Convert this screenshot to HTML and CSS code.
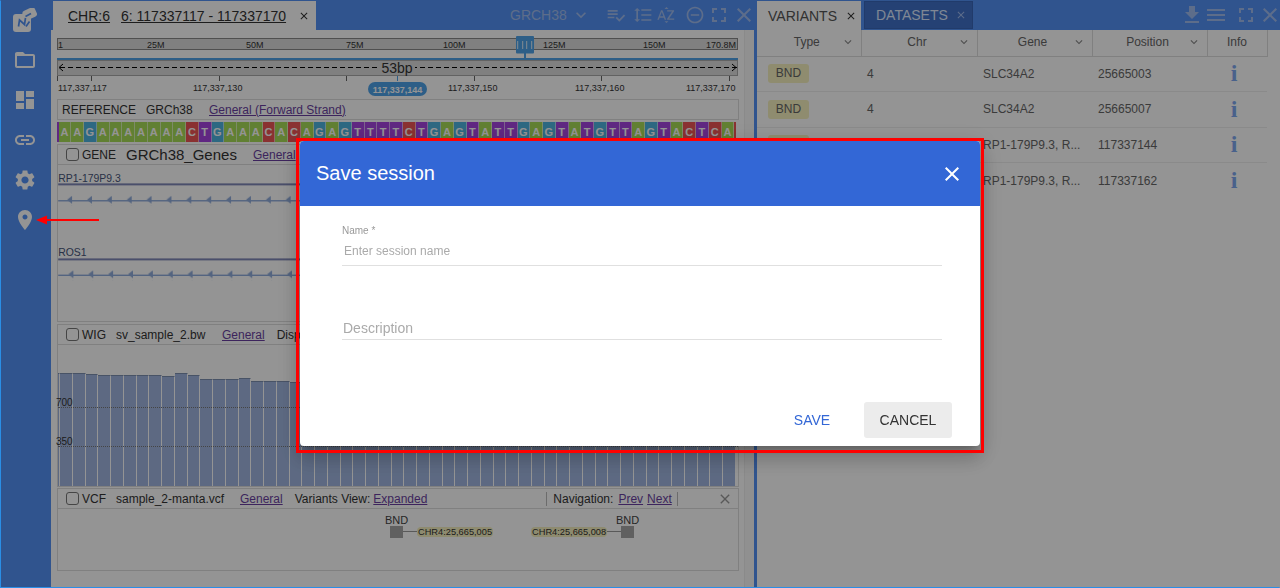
FILE: index.html
```html
<!DOCTYPE html>
<html lang="en">
<head>
  <meta charset="UTF-8">
  <title>NGB - Save session</title>
  <link rel="stylesheet" href="styles.css">
</head>
<body>
  <svg class="defs" width="0" height="0">
    <symbol id="i-close" viewBox="0 0 24 24"><path d="M19 6.41L17.59 5 12 10.59 6.41 5 5 6.41 10.59 12 5 17.59 6.41 19 12 13.41 17.59 19 19 17.59 13.41 12z"/></symbol>
    <symbol id="i-full" viewBox="0 0 24 24"><path d="M7 14H5v5h5v-2H7v-3zm-2-4h2V7h3V5H5v5zm12 7h-3v2h5v-5h-2v3zM14 5v2h3v3h2V5h-5z"/></symbol>
    <symbol id="i-more" viewBox="0 0 24 24"><path d="M16.59 8.59L12 13.17 7.41 8.59 6 10l6 6 6-6z"/></symbol>
  </svg>

  <div class="app">
    <nav class="sidebar">
      <svg class="logo" viewBox="0 0 24 24">
        <rect x="0" y="6" width="18" height="18" rx="3"/>
        <rect x="10" y="1" width="13.500" height="10" rx="3" transform="rotate(-25 16 6)"/>
        <path class="logo-mark" d="M5.500 18.500l1-6.500 5 4.500 1-6.500M12.500 8.500l5.500-3M13 18.500l3.500-5"/>
      </svg>
      <svg class="nav-icon" viewBox="0 0 24 24"><path d="M20 6h-8l-2-2H4c-1.100 0-1.990.9-1.990 2L2 18c0 1.100.9 2 2 2h16c1.100 0 2-.9 2-2V8c0-1.100-.9-2-2-2zm0 12H4V8h16v10z"/></svg>
      <svg class="nav-icon" viewBox="0 0 24 24"><path d="M3 13h8V3H3v10zm0 8h8v-6H3v6zm10 0h8V11h-8v10zm0-18v6h8V3h-8z"/></svg>
      <svg class="nav-icon" viewBox="0 0 24 24"><path d="M3.900 12c0-1.710 1.390-3.100 3.100-3.100h4V7H7c-2.760 0-5 2.240-5 5s2.240 5 5 5h4v-1.900H7c-1.710 0-3.100-1.390-3.100-3.100zM8 13h8v-2H8v2zm9-6h-4v1.900h4c1.710 0 3.100 1.390 3.100 3.100s-1.390 3.100-3.100 3.100h-4V17h4c2.760 0 5-2.240 5-5s-2.240-5-5-5z"/></svg>
      <svg class="nav-icon" viewBox="0 0 24 24"><path d="M19.140 12.940c.04-.3.06-.61.06-.94 0-.32-.02-.64-.07-.94l2.030-1.580c.18-.14.23-.41.12-.61l-1.920-3.320c-.12-.22-.37-.29-.59-.22l-2.390.96c-.5-.38-1.030-.7-1.620-.94l-.36-2.540c-.04-.24-.24-.41-.48-.41h-3.840c-.24 0-.43.17-.47.41l-.36 2.540c-.59.24-1.130.57-1.620.94l-2.390-.96c-.22-.08-.47 0-.59.22L2.740 8.870c-.12.21-.08.47.12.61l2.030 1.580c-.05.3-.09.63-.09.94s.02.64.07.94l-2.030 1.580c-.18.14-.23.41-.12.61l1.920 3.320c.12.22.37.29.59.22l2.390-.96c.5.38 1.030.7 1.620.94l.36 2.540c.05.24.24.41.48.41h3.840c.24 0 .44-.17.47-.41l.36-2.540c.59-.24 1.130-.56 1.620-.94l2.390.96c.22.08.47 0 .59-.22l1.920-3.320c.12-.22.07-.47-.12-.61l-2.010-1.580zM12 15.600c-1.980 0-3.600-1.620-3.600-3.600s1.620-3.600 3.600-3.600 3.600 1.620 3.600 3.600-1.620 3.600-3.600 3.600z"/></svg>
      <svg class="nav-icon" viewBox="0 0 24 24"><path d="M12 2C8.130 2 5 5.130 5 9c0 5.250 7 13 7 13s7-7.750 7-13c0-3.870-3.130-7-7-7zm0 9.500c-1.380 0-2.500-1.120-2.500-2.500s1.120-2.500 2.500-2.500 2.500 1.120 2.500 2.500-1.120 2.500-2.500 2.500z"/></svg>
    </nav>

    <section class="browser">
      <header class="panel-head">
        <div class="tab tab-browser">
          <a class="tab-chr">CHR:6</a>
          <a class="tab-pos">6: 117337117 - 117337170</a>
          <svg class="tab-x"><use href="#i-close"/></svg>
        </div>
        <div class="head-tools tools-left">
          <span class="ref-name">GRCH38</span>
          <svg class="tool tool-more"><use href="#i-more"/></svg>
          <svg class="tool tool-check" viewBox="0 0 24 24"><path d="M14 10H2v2h12v-2zm0-4H2v2h12V6zM2 16h8v-2H2v2zm19.500-4.500L23 13l-6.990 7-4.510-4.500L13 14l3.010 3 5.490-5.500z"/></svg>
          <svg class="tool tool-spacing" viewBox="0 0 24 24"><path d="M6 7h2.500L5 3.500 1.500 7H4v10H1.500L5 20.500 8.500 17H6V7zm4-2v2h12V5H10zm0 14h12v-2H10v2zm0-6h12v-2H10v2z"/></svg>
          <svg class="tool tool-sort" viewBox="0 0 24 24"><path d="M14.940 4.660h-4.720l2.360-2.360zm-4.690 14.710h4.660l-2.330 2.330zM6.100 6.270L1.600 17.730h1.840l.92-2.450h5.110l.92 2.450h1.840L7.740 6.270H6.100zm-1.130 7.370l1.940-5.180 1.940 5.180H4.970zm10.760 2.500h6.120v1.590h-8.530v-1.290l5.920-8.560h-5.880v-1.600h8.300v1.260l-5.930 8.600z"/></svg>
          <svg class="tool tool-minus" viewBox="0 0 24 24"><path d="M7 11v2h10v-2H7zm5-9C6.480 2 2 6.480 2 12s4.480 10 10 10 10-4.480 10-10S17.520 2 12 2zm0 18c-4.410 0-8-3.590-8-8s3.590-8 8-8 8 3.590 8 8-3.590 8-8 8z"/></svg>
          <svg class="tool tool-big tool-full"><use href="#i-full"/></svg>
          <svg class="tool tool-big tool-end"><use href="#i-close"/></svg>
        </div>
      </header>

      <div class="browser-body">
        <div class="tracks">
          <svg class="scale" width="682" height="63" viewBox="0 0 682 63">
            <rect class="ruler" x="0.500" y="2.500" width="680" height="11"/>
            <text x="1" y="11.500">1</text>
            <text x="90" y="11.500">25M</text>
            <text x="189" y="11.500">50M</text>
            <text x="289" y="11.500">75M</text>
            <text x="386" y="11.500">100M</text>
            <text x="486" y="11.500">125M</text>
            <text x="586" y="11.500">150M</text>
            <text x="649" y="11.500">170.8M</text>
            <rect class="blue" x="0" y="22" width="681" height="2"/>
            <rect class="blue" x="459" y="0" width="18" height="17.500" rx="1"/>
            <rect class="blue" x="467" y="17" width="2" height="5"/>
            <path class="brush-lines" d="M460.700 5v8M465.700 5v8M469.700 5v8M474.700 5v8"/>
            <rect class="span-bar" x="0.500" y="24.500" width="680" height="15"/>
            <path class="dash" d="M3 31.500h677"/>
            <path class="arrow" d="M6 28l-4 3.500 4 3.500M675 28l4 3.500-4 3.500"/>
            <rect class="bp-back" x="322" y="26" width="36" height="12"/>
            <text class="bp" x="340" y="37">53bp</text>
            <path class="tick" d="M.5 40v5M34.500 40v5M162.500 40v5M289.500 40v5M417.500 40v5M544.500 40v5M672.500 40v5"/>
            <path class="tick-now" d="M340.500 40v5"/>
            <text x="1" y="54.500">117,337,117</text>
            <text x="136" y="54.500">117,337,130</text>
            <rect class="blue" x="311" y="46" width="59" height="14" rx="7"/>
            <text class="pill-text" x="340.500" y="56.500">117,337,144</text>
            <text x="391" y="54.500">117,337,150</text>
            <text x="518" y="54.500">117,337,160</text>
            <text x="629" y="54.500">117,337,170</text>
          </svg>

          <div class="track-head head-ref">
            <span class="name-ref">REFERENCE</span>
            <span class="name-genome">GRCh38</span>
            <a class="link">General (Forward Strand)</a>
          </div>
          <div class="seq">
            <i class="edge t"></i><i class="a">A</i><i class="a">A</i><i class="g">G</i><i class="a">A</i><i class="a">A</i><i class="a">A</i><i class="a">A</i><i class="a">A</i><i class="a">A</i><i class="a">A</i><i class="c">C</i><i class="t">T</i><i class="g">G</i><i class="a">A</i><i class="a">A</i><i class="a">A</i><i class="c">C</i><i class="a">A</i><i class="c">C</i><i class="a">A</i><i class="g">G</i><i class="a">A</i><i class="g">G</i><i class="t">T</i><i class="t">T</i><i class="t">T</i><i class="t">T</i><i class="c">C</i><i class="t">T</i><i class="g">G</i><i class="a">A</i><i class="g">G</i><i class="t">T</i><i class="a">A</i><i class="t">T</i><i class="t">T</i><i class="g">G</i><i class="a">A</i><i class="g">G</i><i class="t">T</i><i class="a">A</i><i class="t">T</i><i class="g">G</i><i class="t">T</i><i class="t">T</i><i class="a">A</i><i class="g">G</i><i class="t">T</i><i class="a">A</i><i class="c">C</i><i class="t">T</i><i class="c">C</i><i class="a">A</i><i class="edge c"></i>
          </div>

          <div class="track-head head-gene">
            <span class="check"></span>
            <span class="kind">GENE</span>
            <span class="name-genes">GRCh38_Genes</span>
            <a class="link">General</a>
          </div>
          <svg class="gene-track" width="682" height="157" viewBox="0 0 682 157">
            <defs>
              <pattern id="chevrons" width="20" height="10" patternUnits="userSpaceOnUse" x="7" y="0">
                <path d="M6 1L1 5l5 4z"/>
              </pattern>
            </defs>
            <text x="-1" y="17">RP1-179P9.3</text>
            <rect class="gene-bar" x="-1" y="18.500" width="682" height="2"/>
            <rect class="gene-line" x="-1" y="35.300" width="682" height="1.400"/>
            <rect x="7" y="31" width="674" height="10" fill="url(#chevrons)"/>
            <text x="-1" y="92">ROS1</text>
            <rect class="gene-bar" x="-1" y="94" width="682" height="2"/>
            <rect class="gene-line" x="-1" y="110.300" width="682" height="1.400"/>
            <g transform="translate(1.300 75)"><rect x="7" y="31" width="672" height="10" fill="url(#chevrons)"/></g>
          </svg>

          <div class="track-head head-wig">
            <span class="check"></span>
            <span class="kind">WIG</span>
            <span class="name-file">sv_sample_2.bw</span>
            <a class="link">General</a>
            <span class="wig-display">Display</span>
          </div>
          <div class="wig-track">
            <div class="wig-bars">
              <i class="edge" style="height:113px"></i><i style="height:113px"></i><i style="height:113px"></i><i style="height:112px"></i><i style="height:111px"></i><i style="height:111px"></i><i style="height:111px"></i><i style="height:111px"></i><i style="height:111px"></i><i style="height:110px"></i><i style="height:113px"></i><i style="height:111px"></i><i style="height:107px"></i><i style="height:107px"></i><i style="height:107px"></i><i style="height:108px"></i><i style="height:105px"></i><i style="height:105px"></i><i style="height:105px"></i><i style="height:104px"></i><i style="height:104px"></i><i style="height:104px"></i><i style="height:104px"></i><i style="height:104px"></i><i style="height:104px"></i><i style="height:104px"></i><i style="height:104px"></i><i style="height:104px"></i><i style="height:104px"></i><i style="height:104px"></i><i style="height:104px"></i><i style="height:104px"></i><i style="height:104px"></i><i style="height:104px"></i><i style="height:104px"></i><i style="height:104px"></i><i style="height:104px"></i><i style="height:104px"></i><i style="height:104px"></i><i style="height:104px"></i><i style="height:104px"></i><i style="height:104px"></i><i style="height:104px"></i><i style="height:104px"></i><i style="height:104px"></i><i style="height:104px"></i><i style="height:104px"></i><i style="height:104px"></i><i style="height:104px"></i><i style="height:104px"></i><i style="height:104px"></i><i style="height:104px"></i><i style="height:104px"></i><i style="height:104px"></i>
            </div>
            <div class="wig-mark mark-700"><span>700</span></div>
            <div class="wig-mark mark-350"><span>350</span></div>
          </div>

          <div class="track-head head-vcf">
            <span class="check"></span>
            <span class="kind">VCF</span>
            <span class="name-file">sample_2-manta.vcf</span>
            <a class="link">General</a>
            <span class="view-label">Variants View:</span>
            <a class="link">Expanded</a>
            <div class="nav-box">
              <span>Navigation:</span>
              <a class="link">Prev</a>
              <a class="link">Next</a>
            </div>
            <svg class="head-x"><use href="#i-close"/></svg>
          </div>
          <div class="vcf-track">
            <div class="bnd bnd-left">
              <div class="bnd-mark"><span>BND</span><b></b></div>
              <em></em>
              <span class="bnd-label">CHR4:25,665,005</span>
            </div>
            <div class="bnd bnd-right">
              <span class="bnd-label">CHR4:25,665,008</span>
              <em></em>
              <div class="bnd-mark"><span>BND</span><b></b></div>
            </div>
          </div>
        </div>
        <div class="scroll-col"></div>
      </div>
    </section>

    <div class="divider"></div>

    <section class="variants">
      <header class="panel-head">
        <div class="tab tab-variants">
          <span>VARIANTS</span>
          <svg class="tab-x"><use href="#i-close"/></svg>
        </div>
        <div class="tab tab-datasets">
          <span>DATASETS</span>
          <svg class="tab-x"><use href="#i-close"/></svg>
        </div>
        <div class="head-tools tools-right">
          <svg class="tool tool-big" viewBox="0 0 24 24"><path d="M19 9h-4V3H9v6H5l7 7 7-7zM5 18v2h14v-2H5z"/></svg>
          <svg class="tool tool-big" viewBox="0 0 24 24"><path d="M3 18h18v-2H3v2zm0-5h18v-2H3v2zm0-7v2h18V6H3z"/></svg>
          <svg class="tool tool-big tool-gap"><use href="#i-full"/></svg>
          <svg class="tool tool-big"><use href="#i-close"/></svg>
        </div>
      </header>
      <table class="grid">
        <colgroup><col class="c-type"><col class="c-chr"><col class="c-std"><col class="c-std"><col class="c-info"></colgroup>
        <thead>
          <tr>
            <th><div class="th"><span>Type</span><svg><use href="#i-more"/></svg></div></th>
            <th><div class="th"><span>Chr</span><svg><use href="#i-more"/></svg></div></th>
            <th><div class="th"><span>Gene</span><svg><use href="#i-more"/></svg></div></th>
            <th><div class="th"><span>Position</span><svg><use href="#i-more"/></svg></div></th>
            <th><div class="th-plain">Info</div></th>
          </tr>
        </thead>
        <tbody>
          <tr><td><span class="badge">BND</span></td><td>4</td><td>SLC34A2</td><td>25665003</td><td class="info">i</td></tr>
          <tr><td><span class="badge">BND</span></td><td>4</td><td>SLC34A2</td><td>25665007</td><td class="info">i</td></tr>
          <tr><td><span class="badge">BND</span></td><td>6</td><td>RP1-179P9.3, R...</td><td>117337144</td><td class="info">i</td></tr>
          <tr class="no-line"><td><span class="badge">BND</span></td><td>6</td><td>RP1-179P9.3, R...</td><td>117337162</td><td class="info">i</td></tr>
        </tbody>
      </table>
    </section>
  </div>

  <div class="backdrop"></div>

  <div class="dialog">
    <header class="dialog-head">
      <h2>Save session</h2>
      <svg class="dialog-x"><use href="#i-close"/></svg>
    </header>
    <form class="dialog-body">
      <label class="field field-name">
        <span class="field-label">Name *</span>
        <input type="text" placeholder="Enter session name">
      </label>
      <label class="field field-desc">
        <input type="text" placeholder="Description">
      </label>
      <div class="dialog-actions">
        <button type="button" class="btn-save">SAVE</button>
        <button type="button" class="btn-cancel">CANCEL</button>
      </div>
    </form>
  </div>

  <!-- screenshot annotations -->
  <div class="mark-frame"></div>
  <svg class="mark-arrow" width="63" height="12" viewBox="0 0 63 12"><path d="M0 6l11-4.500v3.500h52v2H11v3.500z"/></svg>
  <div class="page-edge"></div>
</body>
</html>
```

FILE: styles.css
```css
* {
  box-sizing: border-box;
}

html, body {
  margin: 0;
  height: 588px;
  overflow: hidden;
}

body {
  font-family: "Liberation Sans", Arial, sans-serif;
  font-size: 12px;
  color: #444;
  background: #fff;
}

.defs {
  display: block;
}

.app {
  display: flex;
  height: 588px;
}

/* sidebar */
.sidebar {
  width: 51px;
  flex: none;
  background: #5492f5;
  display: flex;
  flex-direction: column;
  align-items: center;
  padding: 8px 1px 0 0;
}

.logo {
  width: 24px;
  height: 24px;
  margin-bottom: 16px;
  fill: #fff;
}

.logo-mark {
  fill: none;
  stroke: #5492f5;
  stroke-width: 1.700;
}

.nav-icon {
  width: 24px;
  height: 24px;
  fill: #fff;
  margin-bottom: 16px;
}

/* panel headers */
.panel-head {
  height: 30px;
  flex: none;
  display: flex;
  align-items: flex-end;
  background: #5492f5;
}

.tab {
  height: 29px;
  display: flex;
  align-items: center;
  font-size: 14px;
}

.tab-x {
  width: 12px;
  height: 12px;
  fill: #333;
}

.tab-browser {
  width: 263px;
  margin-left: 2px;
  padding-left: 15px;
  background: #fff;
  color: #333;
}

.tab-browser a {
  text-decoration: underline;
}

.tab-chr {
  margin-right: 11px;
}

.tab-pos {
  margin-right: 12px;
}

.head-tools {
  margin-left: auto;
  height: 30px;
  display: flex;
  align-items: center;
  fill: #a0bcee;
  color: #a0bcee;
}

.tools-left {
  width: 247px;
  flex: none;
  padding-left: 3px;
}

.ref-name {
  font-size: 14px;
}

.tool {
  width: 20px;
  height: 20px;
  flex: none;
}

.tool-big {
  width: 24px;
  height: 24px;
}

.tool-more {
  margin-left: 4px;
}

.tool-check {
  margin-left: 15px;
}

.tool-spacing {
  margin-left: 7px;
}

.tool-sort {
  margin-left: 3px;
}

.tool-minus {
  margin-left: 9px;
}

.tool-full {
  margin-left: 2px;
}

.tool-end {
  margin-left: 1px;
}

/* browser panel */
.browser {
  width: 703px;
  flex: none;
  display: flex;
  flex-direction: column;
}

.browser-body {
  flex: 1;
  display: flex;
  min-height: 0;
}

.tracks {
  width: 693px;
  padding: 6px 0 0 5px;
  background: #fff;
}

.scroll-col {
  width: 10px;
  background: #f8f8f8;
  border-left: 1px solid #eee;
}

.scale {
  display: block;
  margin-left: 1px;
  font-size: 9px;
  fill: #333;
}

.ruler {
  fill: #dcdcdc;
  stroke: #888;
}

.blue {
  fill: #4fa3e8;
}

.brush-lines {
  stroke: #dfeefa;
  fill: none;
}

.span-bar {
  fill: #dcdcdc;
  stroke: #aaa;
}

.dash {
  stroke: #000;
  stroke-dasharray: 5 3;
  fill: none;
}

.arrow {
  stroke: #000;
  fill: none;
}

.bp-back {
  fill: #dcdcdc;
}

.bp {
  font-size: 14px;
  text-anchor: middle;
}

.tick {
  stroke: #666;
}

.tick-now {
  stroke: #4fa3e8;
}

.pill-text {
  fill: #fff;
  font-weight: bold;
  text-anchor: middle;
}

/* track headers */
.track-head {
  height: 21px;
  margin-left: 1px;
  width: 682px;
  display: flex;
  align-items: center;
  border: 1px solid #ddd;
  color: #333;
  white-space: nowrap;
}

.head-ref {
  padding-left: 4px;
}

.name-ref {
  width: 84px;
}

.name-genome {
  width: 63px;
}

.link {
  color: #6a3fa0;
  text-decoration: underline;
}

.head-gene {
  margin-top: 2px;
}

.check {
  width: 13px;
  height: 13px;
  margin: 0 3px 0 8px;
  border: 1px solid #777;
  border-radius: 3px;
  background: #fff;
}

.kind {
  width: 44px;
}

.name-genes {
  width: 127px;
  font-size: 15px;
}

.name-file {
  margin-left: -10px;
}

.head-wig {
  margin-top: 2px;
}

.head-wig .name-file {
  width: 106px;
}

.wig-display {
  margin-left: 12px;
}

.head-vcf {
  margin-top: 1px;
}

.head-vcf .name-file {
  width: 124px;
}

.view-label {
  margin-left: 12px;
  margin-right: 3px;
}

.nav-box {
  display: flex;
  gap: 4px;
  height: 14px;
  align-items: center;
  margin-left: 119px;
  padding: 0 5px 0 6px;
  border-left: 1px solid #bbb;
  border-right: 1px solid #bbb;
}

.nav-box span {
  margin-right: 1px;
}

.head-x {
  width: 16px;
  height: 16px;
  margin-left: 39px;
  fill: #999;
}

/* sequence */
.seq {
  display: flex;
  height: 20px;
  width: 681px;
  margin: 2px 0 0 1px;
  overflow: hidden;
}

.seq i {
  width: 12.750px;
  flex: none;
  font-style: normal;
  font-weight: bold;
  font-size: 11px;
  line-height: 20px;
  text-align: center;
  color: #fff;
  border-right: 1px solid rgba(255,255,255,.55);
}

.seq .edge {
  width: 1.500px;
  border: 0;
}

.seq .a { background: #a8dc58; }
.seq .g { background: #4fb4e0; }
.seq .c { background: #ee5555; }
.seq .t { background: #a644e0; }

/* gene track */
.gene-track {
  display: block;
  margin-left: 1px;
  border: 1px solid #ddd;
  border-top: 0;
  overflow: visible;
  font-size: 10.500px;
  fill: #47557a;
}

.gene-bar {
  fill: #8088b8;
}

.gene-line {
  fill: #90acdc;
}

#chevrons path {
  fill: #90acdc;
}

/* wig track */
.wig-track {
  position: relative;
  height: 142px;
  margin-left: 1px;
  border: 1px solid #ddd;
  border-top: 0;
  width: 682px;
  display: flex;
  align-items: flex-end;
}

.wig-bars {
  display: flex;
  align-items: flex-end;
  width: 100%;
  overflow: hidden;
}

.wig-bars i {
  width: 12.750px;
  flex: none;
  background: #a0b6e0;
  border-top: 1px solid #7d8fb0;
  border-right: 1px solid #fff;
}

.wig-bars .edge {
  width: 2px;
}

.wig-mark {
  position: absolute;
  left: 0;
  right: 0;
  border-top: 1px dotted #777;
  font-size: 10px;
  color: #333;
}

.wig-mark span {
  position: absolute;
  left: -2px;
  bottom: 0;
}

.mark-700 {
  top: 62px;
}

.mark-350 {
  top: 101px;
}

/* vcf track */
.vcf-track {
  height: 62px;
  width: 682px;
  margin-left: 1px;
  border: 1px solid #ddd;
  border-top: 0;
  display: flex;
  padding: 5px 0 0 327px;
}

.bnd {
  display: flex;
  align-items: flex-end;
  height: 24px;
}

.bnd-right {
  margin-left: 38px;
}

.bnd-mark {
  display: flex;
  flex-direction: column;
  align-items: center;
  width: 23px;
}

.bnd-mark span {
  font-size: 11px;
  line-height: 12px;
}

.bnd-mark b {
  display: block;
  width: 13px;
  height: 12px;
  background: #a5a5a5;
}

.bnd em {
  display: block;
  width: 14px;
  height: 1px;
  background: #999;
  margin-bottom: 6px;
}

.bnd-left em { margin-left: -5px; }
.bnd-right em { margin-right: -5px; }

.bnd-label {
  background: #f5f0c0;
  border-radius: 4px;
  font-size: 9.250px;
  line-height: 10px;
  padding: 0 1px;
  margin-bottom: 1px;
  color: #333;
}

/* divider */
.divider {
  width: 3px;
  flex: none;
  background: #5492f5;
}

/* variants panel */
.variants {
  flex: 1;
  display: flex;
  flex-direction: column;
  background: #fff;
}

.tab-variants {
  width: 104px;
  padding-left: 11px;
  background: #fff;
  color: #555;
  gap: 8px;
}

.tab-datasets {
  width: 109px;
  height: 28px;
  margin: 0 0 1px 3px;
  padding-left: 11px;
  background: #4070c8;
  color: #dce8ff;
  gap: 7px;
  border: 1px solid #3a66b8;
}

.tab-datasets .tab-x {
  fill: #a0bcee;
}

.tools-right {
  margin-right: -2px;
}

.tool-gap {
  margin-left: 6px;
}

.grid {
  width: 510px;
  border-collapse: collapse;
  table-layout: fixed;
  color: #666;
}

.c-type { width: 104px; }
.c-chr { width: 116px; }
.c-std { width: 115px; }
.c-info { width: 60px; }

.grid th {
  height: 26px;
  padding: 0;
  font-weight: normal;
  color: #666;
  border-bottom: 1px solid #ddd;
  border-right: 1px solid #ddd;
}

.th {
  display: grid;
  grid-template-columns: 1fr auto;
  align-items: center;
  padding: 0 0 2px 16px;
  text-align: center;
}

.th-plain {
  padding-bottom: 2px;
}

.th svg {
  width: 14px;
  height: 14px;
  fill: #888;
  margin-right: 6px;
}

.grid td {
  height: 35.500px;
  padding: 0 6px;
  white-space: nowrap;
  border-bottom: 1px solid #eee;
}

.grid .no-line td {
  border-bottom: 0;
}

.grid td:first-child {
  padding-left: 11px;
}

.badge {
  display: block;
  width: 41px;
  height: 19px;
  line-height: 19px;
  text-align: center;
  background: #f7f2c0;
  border-radius: 3px;
}

.grid .info {
  padding: 0 6px 0 0;
  text-align: center;
  font-family: "Liberation Serif", serif;
  font-weight: bold;
  font-size: 24px;
  color: #7fa8f0;
}

/* modal */
.backdrop {
  position: fixed;
  inset: 0;
  background: rgba(0,0,0,.42);
}

.dialog {
  position: fixed;
  left: 300px;
  top: 141px;
  width: 680px;
  height: 305px;
  background: #fff;
  border-radius: 4px;
  box-shadow: 0 7px 8px -4px rgba(0,0,0,.2), 0 13px 19px 2px rgba(0,0,0,.14), 0 5px 24px 4px rgba(0,0,0,.12);
  display: flex;
  flex-direction: column;
  overflow: hidden;
}

.dialog-head {
  height: 65px;
  flex: none;
  background: #3367d6;
  color: #fff;
  display: flex;
  align-items: center;
  justify-content: space-between;
  padding: 0 16px;
}

.dialog-head h2 {
  margin: 0;
  font-size: 20px;
  font-weight: 400;
}

.dialog-x {
  width: 24px;
  height: 24px;
  fill: #fff;
}

.dialog-body {
  flex: 1;
  display: flex;
  flex-direction: column;
  padding: 19px 28px 8px 42px;
}

.field {
  display: block;
  width: 600px;
  border-bottom: 1px solid #e0e0e0;
}

.field input {
  display: block;
  width: 100%;
  border: 0;
  outline: 0;
  padding: 0 2px;
  font-family: "Liberation Sans", Arial, sans-serif;
}

.field input::placeholder {
  color: #aaa;
  opacity: 1;
}

.field-label {
  display: block;
  font-size: 10px;
  line-height: 12px;
  color: #999;
  margin-bottom: 6px;
}

.field-name input {
  font-size: 12px;
  height: 16px;
  margin-bottom: 6px;
}

.field-desc {
  margin-top: 52px;
}

.field-desc input {
  font-size: 14px;
  height: 20px;
  padding: 0 1px;
  margin-bottom: 1px;
}

.dialog-actions {
  margin-top: auto;
  display: flex;
  justify-content: flex-end;
  align-items: center;
  gap: 16px;
}

.dialog-actions button {
  height: 36px;
  border: 0;
  border-radius: 3px;
  font-family: "Liberation Sans", Arial, sans-serif;
  font-size: 14px;
  background: none;
}

.btn-save {
  width: 72px;
  color: #3367d6;
}

.btn-cancel {
  width: 88px;
  color: #333;
}

.dialog-actions .btn-cancel {
  background: #ececec;
}

/* annotations over the screenshot */
.mark-frame {
  position: fixed;
  left: 296px;
  top: 138px;
  width: 688px;
  height: 315px;
  border: 3px solid #f00;
  pointer-events: none;
}

.mark-arrow {
  position: fixed;
  left: 36px;
  top: 214px;
  fill: #f00;
}

.page-edge {
  position: fixed;
  inset: 0;
  border: 1px solid #2a8ee6;
  border-top-color: transparent;
  border-right-color: transparent;
  pointer-events: none;
}
```
